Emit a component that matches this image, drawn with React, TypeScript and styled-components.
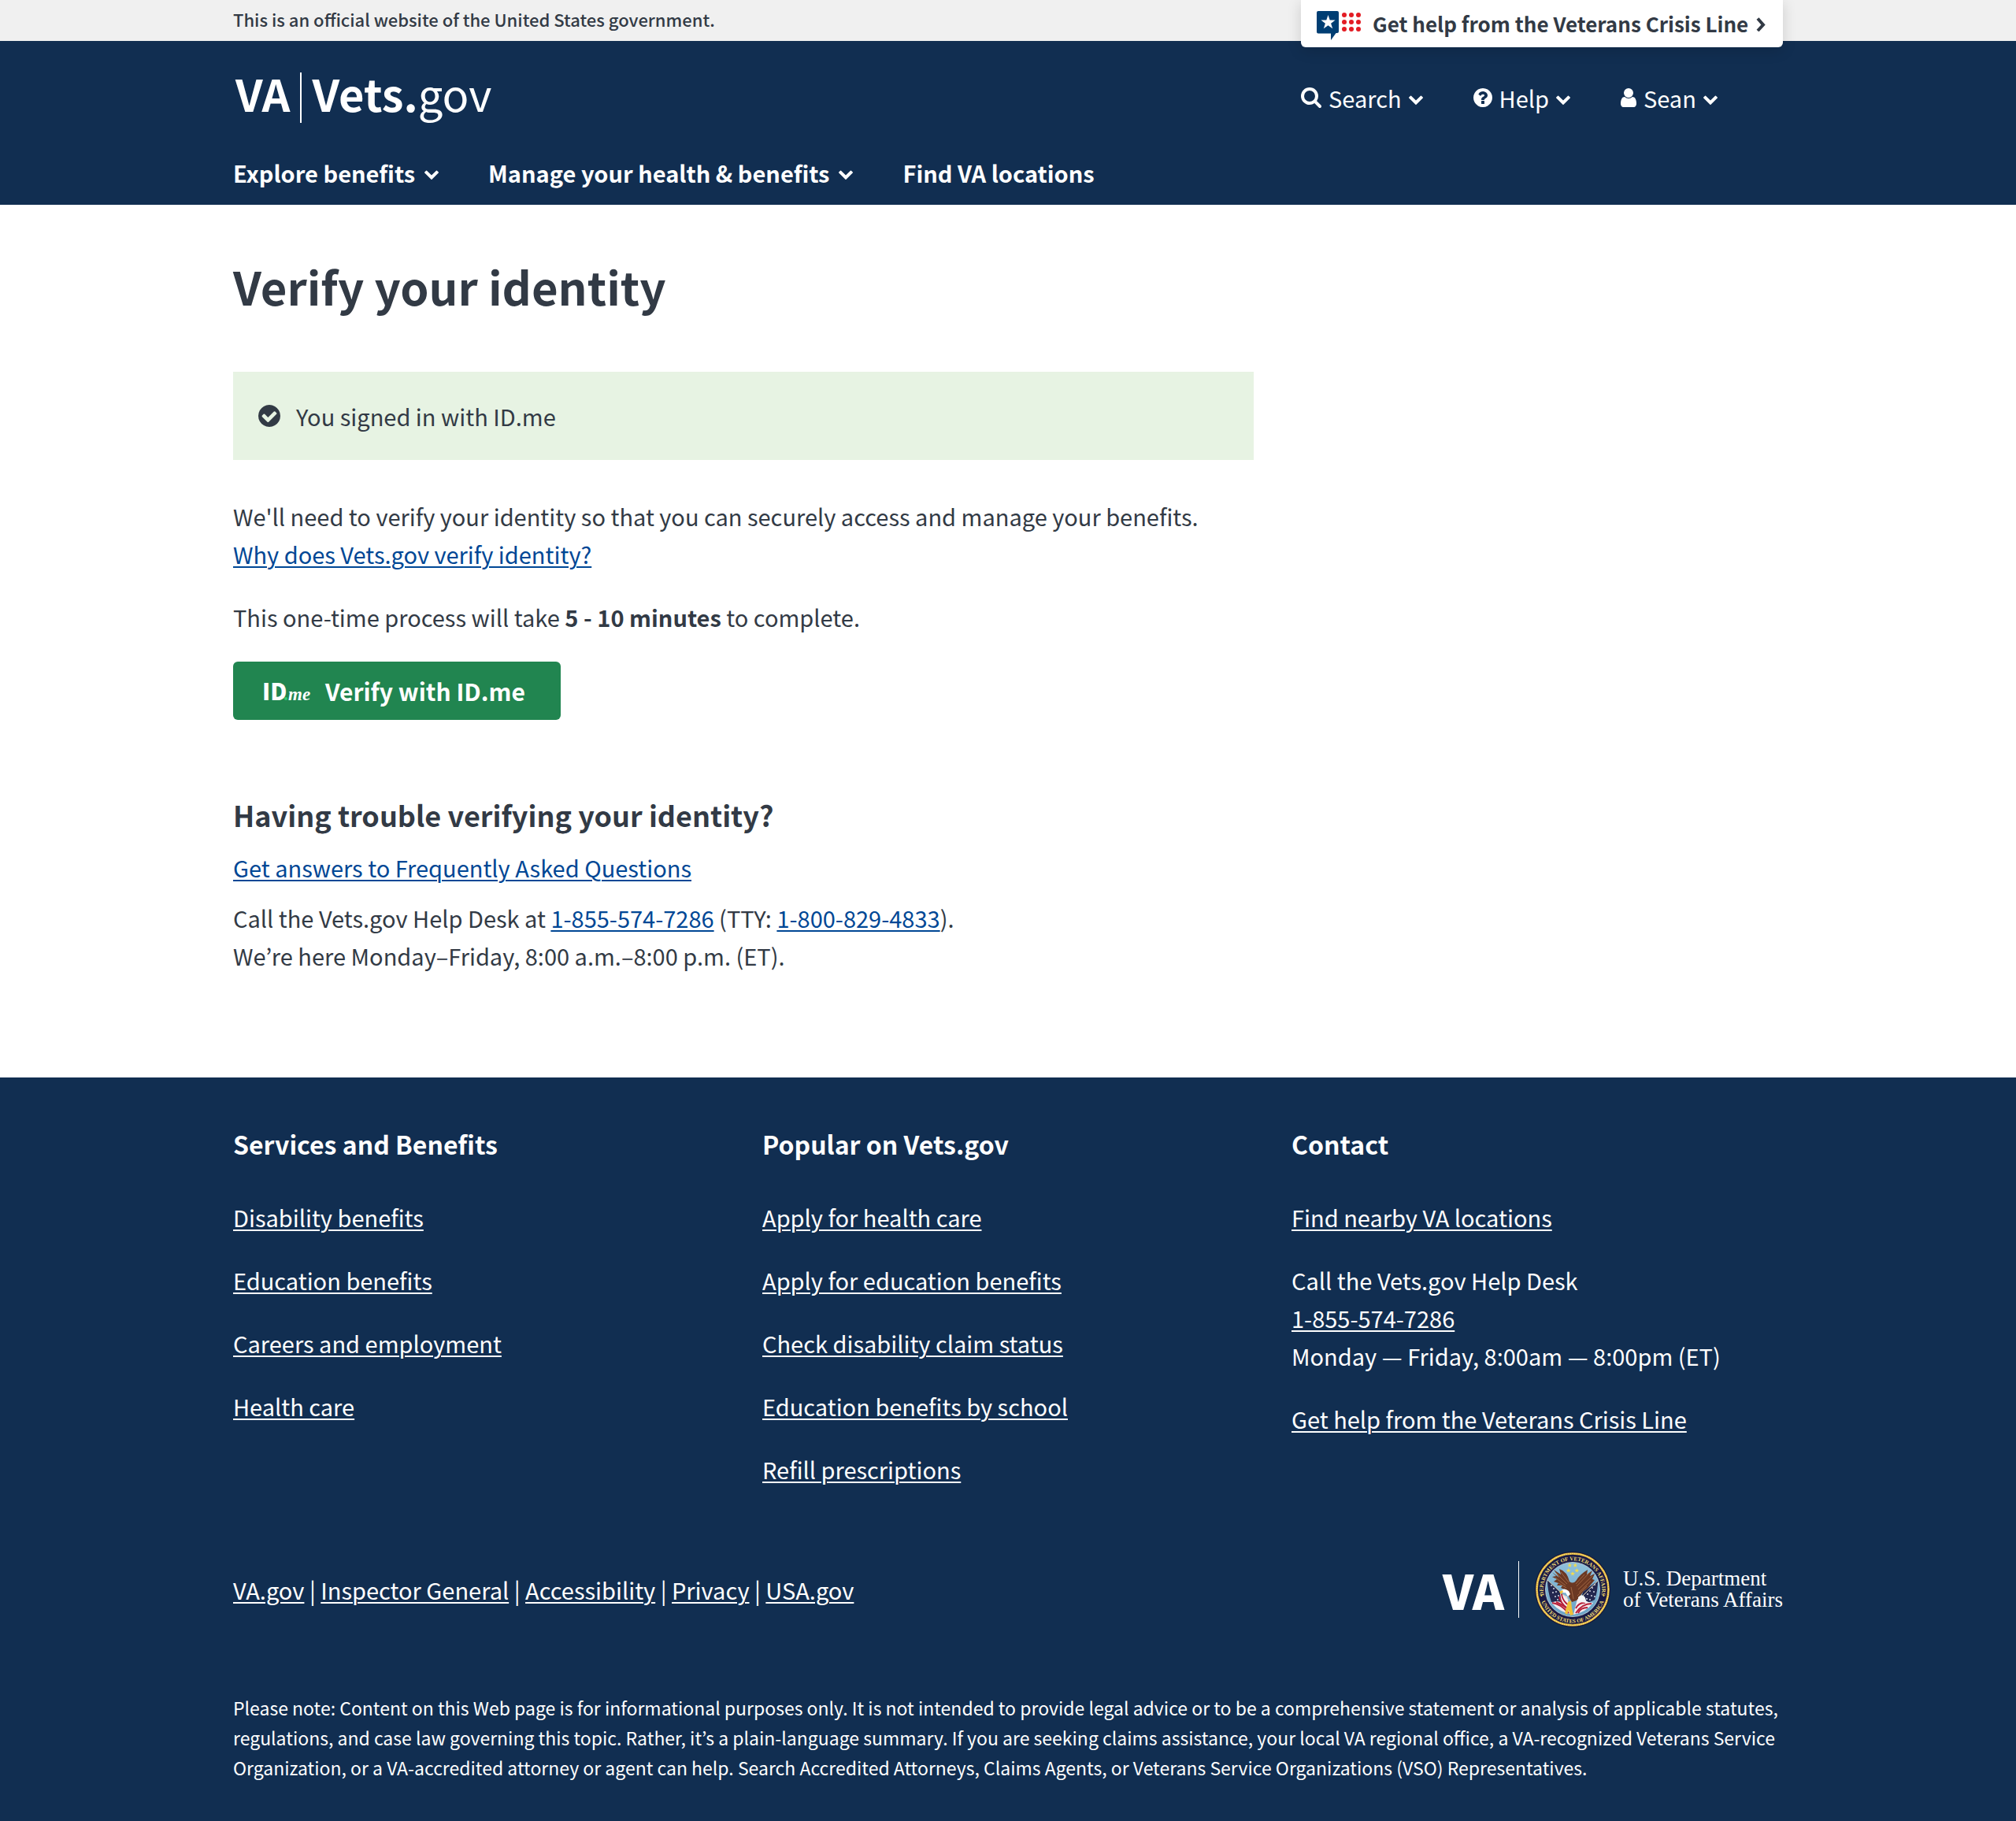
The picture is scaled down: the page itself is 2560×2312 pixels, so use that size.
import React from "react";
import styled, { createGlobalStyle } from "styled-components";

const navy = "#112e51";
const ink = "#323a45";
const linkBlue = "#004795";

const GlobalStyle = createGlobalStyle`
  *, *::before, *::after { box-sizing: border-box; }
  body {
    margin: 0;
    background: #fff;
    color: ${ink};
    font-family: "Noto Sans CJK JP", "Noto Sans", sans-serif;
    font-size: 29px;
    line-height: 48px;
  }
  h1, h2, h3, p, ul { margin: 0; padding: 0; }
  ul { list-style: none; }
  svg { display: block; flex: none; }
`;

const Container = styled.div`
  width: 100%;
  max-width: 2000px;
  margin: 0 auto;
  padding: 0 16px;
`;

/* Official banner */

const Banner = styled.div`
  height: 52px;
  background: #f0f0f0;
`;

const BannerRow = styled(Container)`
  display: flex;
  justify-content: space-between;
  align-items: flex-start;
`;

const BannerText = styled.p`
  font-size: 22px;
  font-weight: 500;
`;

const CrisisLink = styled.a`
  position: relative;
  z-index: 1;
  display: flex;
  align-items: center;
  width: 612px;
  height: 60px;
  padding: 0 20px;
  border-radius: 0 0 6px 6px;
  background: #fff;
  color: ${ink};
  font-size: 26px;
  font-weight: 700;
  text-decoration: none;
  white-space: nowrap;
  box-shadow: 0 4px 18px rgba(0, 0, 0, 0.15);
`;

const CrisisLabel = styled.span`
  margin: 0 10px 0 15px;
`;

/* Site header */

const Header = styled.header`
  background: ${navy};
  color: #fff;
`;

const HeaderTop = styled(Container)`
  display: flex;
  justify-content: space-between;
  padding-top: 40px;
`;

const SiteLogo = styled.a`
  display: flex;
  height: 64px;
  padding-left: 3px;
  color: #fff;
  font-size: 56px;
  font-weight: 700;
  line-height: 52px;
  text-decoration: none;
`;

const LogoDivider = styled.span`
  width: 2px;
  height: 64px;
  margin: 0 14px 0 12px;
  background: #fff;
`;

const LogoLight = styled.span`
  font-weight: 400;
`;

const UtilityNav = styled.div`
  display: flex;
  align-items: center;
  gap: 64px;
  width: 612px;
`;

const MenuButton = styled.button<{ $gap: number; $bold?: boolean }>`
  display: flex;
  align-items: center;
  gap: ${(p) => p.$gap}px;
  padding: 0;
  border: 0;
  background: none;
  color: #fff;
  font: inherit;
  font-weight: ${(p) => (p.$bold ? 700 : 400)};
  white-space: nowrap;
  cursor: pointer;
`;

const MainNav = styled.nav`
  padding: 39px 0 17px;
`;

const MainNavRow = styled(Container)`
  display: flex;
  gap: 63px;
`;

const NavLink = styled.a`
  color: #fff;
  font-weight: 700;
  text-decoration: none;
`;

/* Page body */

const Main = styled.main`
  padding: 60px 0 130px;
`;

const Content = styled.div`
  max-width: 1296px;
`;

const PageTitle = styled.h1`
  margin-bottom: 66px;
  font-size: 58px;
  font-weight: 700;
  line-height: 86px;
`;

const Alert = styled.div`
  display: flex;
  align-items: center;
  gap: 20px;
  margin-bottom: 47px;
  padding: 32px;
  background: #e7f3e3;
`;

const Paragraph = styled.p<{ $after?: number }>`
  margin-bottom: ${(p) => p.$after ?? 0}px;
`;

const TextLink = styled.a<{ $light?: boolean }>`
  color: ${(p) => (p.$light ? "#fff" : linkBlue)};
  text-decoration: underline;
  text-decoration-thickness: 2px;
  text-underline-offset: 3px;
`;

const VerifyButton = styled.button`
  display: flex;
  align-items: center;
  gap: 18px;
  height: 74px;
  margin-top: 33px;
  padding: 0 45px 0 37px;
  border: 0;
  border-radius: 6px;
  background: #218550;
  color: #fff;
  font: inherit;
  font-size: 30px;
  font-weight: 700;
  cursor: pointer;
`;

const SectionTitle = styled.h2`
  margin: 96px 0 19px;
  font-size: 36px;
  font-weight: 700;
`;

/* Footer */

const Footer = styled.footer`
  padding: 60px 0 50px;
  background: ${navy};
  color: #fff;
`;

const FooterColumns = styled(Container)`
  display: grid;
  grid-template-columns: repeat(3, 1fr);
  gap: 48px;
`;

const FooterTitle = styled.h3`
  margin-bottom: 45px;
  font-size: 32px;
  font-weight: 700;
`;

const FooterList = styled.ul`
  display: grid;
  gap: 32px;
`;

const FooterBottom = styled(Container)`
  display: flex;
  justify-content: space-between;
  align-items: center;
  margin-top: 81px;
  margin-bottom: 83px;
`;

const AgencyLogo = styled.a`
  display: flex;
  align-items: center;
  color: #fff;
  text-decoration: none;
`;

const AgencyMark = styled.span`
  font-size: 61px;
  font-weight: 900;
`;

const AgencyDivider = styled.span`
  width: 1px;
  height: 72px;
  margin: 0 20px 0 18px;
  background: #fff;
`;

const AgencyName = styled.span`
  margin-left: 16px;
  font-family: "Liberation Serif", serif;
  font-size: 27px;
  line-height: 27px;
`;

const Note = styled.p`
  font-size: 23px;
  line-height: 38px;
`;

/* Icons */

const ChevronDown = () => (
  <svg width="18" height="18" viewBox="90 -44 1612 1612" fill="currentColor" aria-hidden="true">
    <path d="M1683 808l-742 741q-19 19-45 19t-45-19l-742-741q-19-19-19-45.500t19-45.500l166-165q19-19 45-19t45 19l531 531 531-531q19-19 45-19t45 19l166 165q19 19 19 45.500t-19 45.500z" />
  </svg>
);

const ChevronRight = () => (
  <svg width="12" height="20" viewBox="0 0 12 20" fill="none" stroke="currentColor" strokeWidth="4" aria-hidden="true">
    <path d="M2 3.500L9 11.500L2 19" />
  </svg>
);

const SearchIcon = () => (
  <svg width="26" height="26" viewBox="64 128 1664 1664" fill="currentColor" aria-hidden="true">
    <path d="M1216 832q0-185-131.500-316.500t-316.500-131.500-316.500 131.500-131.500 316.500 131.500 316.500 316.500 131.500 316.500-131.500 131.500-316.500zm512 832q0 52-38 90t-90 38q-54 0-90-38l-343-342q-179 124-399 124-143 0-273.500-55.500t-225-150-150-225-55.500-273.500 55.500-273.500 150-225 225-150 273.500-55.500 273.500 55.500 225 150 150 225 55.500 273.500q0 220-124 399l343 343q37 37 37 90z" />
  </svg>
);

const HelpIcon = () => (
  <svg width="24" height="24" viewBox="128 128 1536 1536" fill="currentColor" aria-hidden="true">
    <path d="M1024 1376v-192q0-14-9-23t-23-9h-192q-14 0-23 9t-9 23v192q0 14 9 23t23 9h192q14 0 23-9t9-23zm256-672q0-88-55.500-163t-138.500-116-170-41q-243 0-371 213-15 24 8 42l132 100q7 6 19 6 16 0 25-12 53-68 86-92 34-24 86-24 48 0 85.500 26t37.500 59q0 38-20 61t-68 45q-63 28-115.500 86.500t-52.500 125.500v36q0 14 9 23t23 9h192q14 0 23-9t9-23q0-19 21.500-49.500t54.500-49.500q32-18 49-28.500t46-35 44.500-48 28-60.500 12.500-81zm384 192q0 209-103 385.500t-279.500 279.500-385.500 103-385.500-103-279.500-279.500-103-385.500 103-385.500 279.500-279.500 385.500-103 385.500 103 279.500 279.500 103 385.500z" />
  </svg>
);

const UserIcon = () => (
  <svg width="20" height="24" viewBox="256 128 1280 1536" fill="currentColor" aria-hidden="true">
    <path d="M1536 1399q0 109-62.500 187t-150.500 78h-854q-88 0-150.500-78t-62.500-187q0-85 8.500-160.500t31.500-152 58.500-131 94-89 134.500-34.500q131 128 313 128t313-128q76 0 134.500 34.500t94 89 58.500 131 31.500 152 8.500 160.500zm-256-887q0 159-112.500 271.500t-271.500 112.500-271.500-112.500-112.500-271.500 112.500-271.500 271.500-112.500 271.500 112.500 112.500 271.500z" />
  </svg>
);

const CheckIcon = () => (
  <svg width="28" height="28" viewBox="128 128 1536 1536" fill="currentColor" aria-hidden="true">
    <path d="M1412 734q0-28-18-46l-91-90q-19-19-45-19t-45 19l-408 407-226-226q-19-19-45-19t-45 19l-91 90q-18 18-18 46 0 27 18 45l362 362q19 19 45 19 27 0 46-19l543-543q18-18 18-45zm252 162q0 209-103 385.500t-279.500 279.500-385.500 103-385.500-103-279.500-279.500-103-385.500 103-385.500 279.500-279.500 385.500-103 385.500 103 279.500 279.500 103 385.500z" />
  </svg>
);

const CrisisIcon = () => (
  <svg width="56" height="42" viewBox="0 0 56 42" aria-hidden="true">
    <path fill="#003e73" d="M2 5h24q2 0 2 2v24q0 2-2 2h-1.500L18 42v-8.500H2q-2 0-2-2V7q0-2 2-2z" />
    <path fill="#fff" d="M14.500 10l2.200 6.600h6.900l-5.500 4.100 2.100 6.600-5.700-4.100-5.700 4.100 2.100-6.600-5.500-4.100h6.900z" />
    {[10, 19, 28].map((y) =>
      [35, 44, 53].map((x) => <circle key={`${x}-${y}`} cx={x} cy={y} r="3" fill="#e31c24" />)
    )}
  </svg>
);

const IdMeLogo = () => (
  <svg width="62" height="48" viewBox="0 0 62 48" overflow="visible" aria-hidden="true">
    <text x="0" y="36" fill="#fff" fontSize="29" fontWeight="900">ID</text>
    <circle cx="30" cy="34" r="2" fill="#2ecc71" />
    <text x="33" y="36" fill="#fff" fontFamily="Liberation Serif, serif" fontStyle="italic" fontWeight="700" fontSize="23">me</text>
  </svg>
);

const sealStars = [[42.7, 24], [44.3, 17.3], [51.3, 17.3], [53.3, 24], [48, 28]];
const flagStars = [[21, 43], [24, 47], [23, 52], [27, 51], [26, 57], [30, 56], [29, 61], [76, 42], [73, 46], [70, 50], [75, 51], [67, 54], [72, 56], [76, 57], [66, 60], [70, 61]];

const Seal = () => (
  <svg width="96" height="96" viewBox="0 0 96 96" role="img" aria-label="Department of Veterans Affairs seal">
    <defs>
      <path id="seal-top" d="M11.300 54.500A37.200 37.200 0 1 1 84.700 54.500" />
      <path id="seal-bottom" d="M6.800 58.500A42.500 42.500 0 0 0 89.200 58.500" />
      <linearGradient id="seal-sky" x1="0" y1="0" x2="0" y2="1">
        <stop offset="0" stopColor="#8fc0dc" />
        <stop offset="1" stopColor="#6aa3c6" />
      </linearGradient>
      <clipPath id="seal-clip"><circle cx="48" cy="48" r="34.500" /></clipPath>
    </defs>
    <circle cx="48" cy="48" r="48" fill="#14163b" />
    <circle cx="48" cy="48" r="45.500" fill="#191a45" stroke="#e4b63e" strokeWidth="2.600" />
    <circle cx="48" cy="48" r="45.500" fill="none" stroke="#f9e27c" strokeWidth="1.200" strokeDasharray="1.500 1.200" />
    <circle cx="48" cy="48" r="34.500" fill="url(#seal-sky)" stroke="#c9dbe2" strokeWidth="0.800" />
    <g clipPath="url(#seal-clip)">
      <path fill="#23274f" d="M16 36L36 54L34 68Q26 63 21 64Q16 50 16 36z" />
      <path fill="#23274f" d="M80 37L61 51L58 64Q68 66 76 61Q80 50 80 37z" />
      {flagStars.map(([x, y]) => <circle key={`${x}-${y}`} cx={x} cy={y} r="0.900" fill="#e6e8f2" />)}
      <path fill="#f4ecee" d="M32 53l9 4 5 22q-13-1-25-14q8-4 13 0z" />
      <path fill="#f4ecee" d="M54 60q6-4 10-1q-1 5 10 6q-9 12-25 15z" />
      <g fill="none" stroke="#b71f38" strokeWidth="2">
        <path d="M34 54Q35 63 44 69" />
        <path d="M31 57Q33 67 44 74" />
        <path d="M22 65Q32 66 43 78" />
        <path d="M27 64Q36 68 41 72" />
        <path d="M72 66Q60 66 52 78" />
        <path d="M64 65Q56 64 52 72" />
        <path d="M67 71Q58 71 55 78" />
      </g>
    </g>
    <path d="M16 36L44 62M80 37L55 62" stroke="#d9cfae" strokeWidth="1" />
    <path fill="#6b3823" d="M22 26L31 33L24 23L33 29L31 22Q41 25 44 38Q49 42 53 36Q57 29 67 23L66 29L73 24L70 31L76 28L73 35L76 36L71 42L67 47L62 50L58 56L53 62L47 64L42 55L40 49L33 46L35 43L28 43L30 40L24 38L28 35L22 32L27 31z" />
    <g fill="none" stroke="#a56a45" strokeWidth="0.900">
      <path d="M27 27L41 41M26 33L39 43M33 26L43 39M30 40L40 46" />
      <path d="M69 27L53 44M73 31L55 48M71 37L56 52M63 29L52 41M66 44L54 56" />
      <path d="M46 45L49 60" />
    </g>
    <path fill="#fff" d="M43 50Q37 45 33 50Q35 53 39 52L42 57L45 54z" />
    <path fill="#f3c53c" d="M35 49L31 51L33 54L36 51z" />
    <path fill="#f3f5f8" d="M55 58q4-5 8-1q3 4 1 8q-5-1-9-2z" />
    <path fill="#f0c037" d="M42 64L46 62L47 72L49 80L45 81L43 74L41 80L38 78z" />
    <g fill="#f4dc4c">
      {sealStars.map(([x, y]) => (
        <path key={`${x}-${y}`} transform={`translate(${x} ${y})`} d="M0-3L.8-.9 3-.9 1.200.4 1.900 2.600 0 1.300-1.900 2.600-1.200.4-3-.9-.8-.9z" />
      ))}
      <circle cx="8.500" cy="56" r="0.900" />
      <circle cx="87.500" cy="56" r="0.900" />
    </g>
    <g fill="#f1dd77" fontFamily="Liberation Serif, serif" fontWeight="700" fontSize="7">
      <text textAnchor="middle"><textPath href="#seal-top" startOffset="50%">DEPARTMENT OF VETERANS AFFAIRS</textPath></text>
      <text textAnchor="middle"><textPath href="#seal-bottom" startOffset="50%">UNITED STATES OF AMERICA</textPath></text>
    </g>
  </svg>
);

const services = ["Disability benefits", "Education benefits", "Careers and employment", "Health care"];
const popular = [
  "Apply for health care",
  "Apply for education benefits",
  "Check disability claim status",
  "Education benefits by school",
  "Refill prescriptions",
];
const siteLinks = ["VA.gov", "Inspector General", "Accessibility", "Privacy", "USA.gov"];

const LinkColumn = ({ title, links }: { title: string; links: string[] }) => (
  <div>
    <FooterTitle>{title}</FooterTitle>
    <FooterList>
      {links.map((label) => (
        <li key={label}><TextLink $light href="#">{label}</TextLink></li>
      ))}
    </FooterList>
  </div>
);

export default function App() {
  return (
    <>
      <GlobalStyle />
      <Banner>
        <BannerRow>
          <BannerText>This is an official website of the United States government.</BannerText>
          <CrisisLink href="#">
            <CrisisIcon />
            <CrisisLabel>Get help from the Veterans Crisis Line</CrisisLabel>
            <ChevronRight />
          </CrisisLink>
        </BannerRow>
      </Banner>
      <Header>
        <HeaderTop>
          <SiteLogo href="#">
            <span>VA</span>
            <LogoDivider />
            <span>Vets.</span>
            <LogoLight>gov</LogoLight>
          </SiteLogo>
          <UtilityNav>
            <MenuButton $gap={9}><SearchIcon />Search <ChevronDown /></MenuButton>
            <MenuButton $gap={9}><HelpIcon />Help <ChevronDown /></MenuButton>
            <MenuButton $gap={9}><UserIcon />Sean <ChevronDown /></MenuButton>
          </UtilityNav>
        </HeaderTop>
        <MainNav>
          <MainNavRow>
            <MenuButton $gap={12} $bold>Explore benefits <ChevronDown /></MenuButton>
            <MenuButton $gap={12} $bold>Manage your health &amp; benefits <ChevronDown /></MenuButton>
            <NavLink href="#">Find VA locations</NavLink>
          </MainNavRow>
        </MainNav>
      </Header>
      <Main>
        <Container>
          <Content>
            <PageTitle>Verify your identity</PageTitle>
            <Alert role="status">
              <CheckIcon />
              <span>You signed in with ID.me</span>
            </Alert>
            <Paragraph $after={32}>
              We'll need to verify your identity so that you can securely access and manage your benefits.
              <br />
              <TextLink href="#">Why does Vets.gov verify identity?</TextLink>
            </Paragraph>
            <Paragraph>
              This one-time process will take <strong>5 - 10 minutes</strong> to complete.
            </Paragraph>
            <VerifyButton><IdMeLogo />Verify with ID.me</VerifyButton>
            <SectionTitle>Having trouble verifying your identity?</SectionTitle>
            <Paragraph $after={16}>
              <TextLink href="#">Get answers to Frequently Asked Questions</TextLink>
            </Paragraph>
            <Paragraph $after={1}>
              Call the Vets.gov Help Desk at <TextLink href="tel:18555747286">1-855-574-7286</TextLink> (TTY:{" "}
              <TextLink href="tel:18008294833">1-800-829-4833</TextLink>).
              <br />
              We’re here Monday–Friday, 8:00 a.m.–8:00 p.m. (ET).
            </Paragraph>
          </Content>
        </Container>
      </Main>
      <Footer>
        <FooterColumns>
          <LinkColumn title="Services and Benefits" links={services} />
          <LinkColumn title="Popular on Vets.gov" links={popular} />
          <div>
            <FooterTitle>Contact</FooterTitle>
            <FooterList>
              <li><TextLink $light href="#">Find nearby VA locations</TextLink></li>
              <li>
                Call the Vets.gov Help Desk
                <br />
                <TextLink $light href="tel:18555747286">1-855-574-7286</TextLink>
                <br />
                Monday — Friday, 8:00am — 8:00pm (ET)
              </li>
              <li><TextLink $light href="#">Get help from the Veterans Crisis Line</TextLink></li>
            </FooterList>
          </div>
        </FooterColumns>
        <FooterBottom>
          <p>
            {siteLinks.map((label, i) => (
              <React.Fragment key={label}>
                {i > 0 && " | "}
                <TextLink $light href="#">{label}</TextLink>
              </React.Fragment>
            ))}
          </p>
          <AgencyLogo href="#">
            <AgencyMark>VA</AgencyMark>
            <AgencyDivider />
            <Seal />
            <AgencyName>U.S. Department<br />of Veterans Affairs</AgencyName>
          </AgencyLogo>
        </FooterBottom>
        <Container>
          <Note>
            Please note: Content on this Web page is for informational purposes only. It is not intended to provide
            legal advice or to be a comprehensive statement or analysis of applicable statutes, regulations, and case
            law governing this topic. Rather, it’s a plain-language summary. If you are seeking claims assistance, your
            local VA regional office, a VA-recognized Veterans Service Organization, or a VA-accredited attorney or
            agent can help. Search Accredited Attorneys, Claims Agents, or Veterans Service Organizations (VSO)
            Representatives.
          </Note>
        </Container>
      </Footer>
    </>
  );
}
